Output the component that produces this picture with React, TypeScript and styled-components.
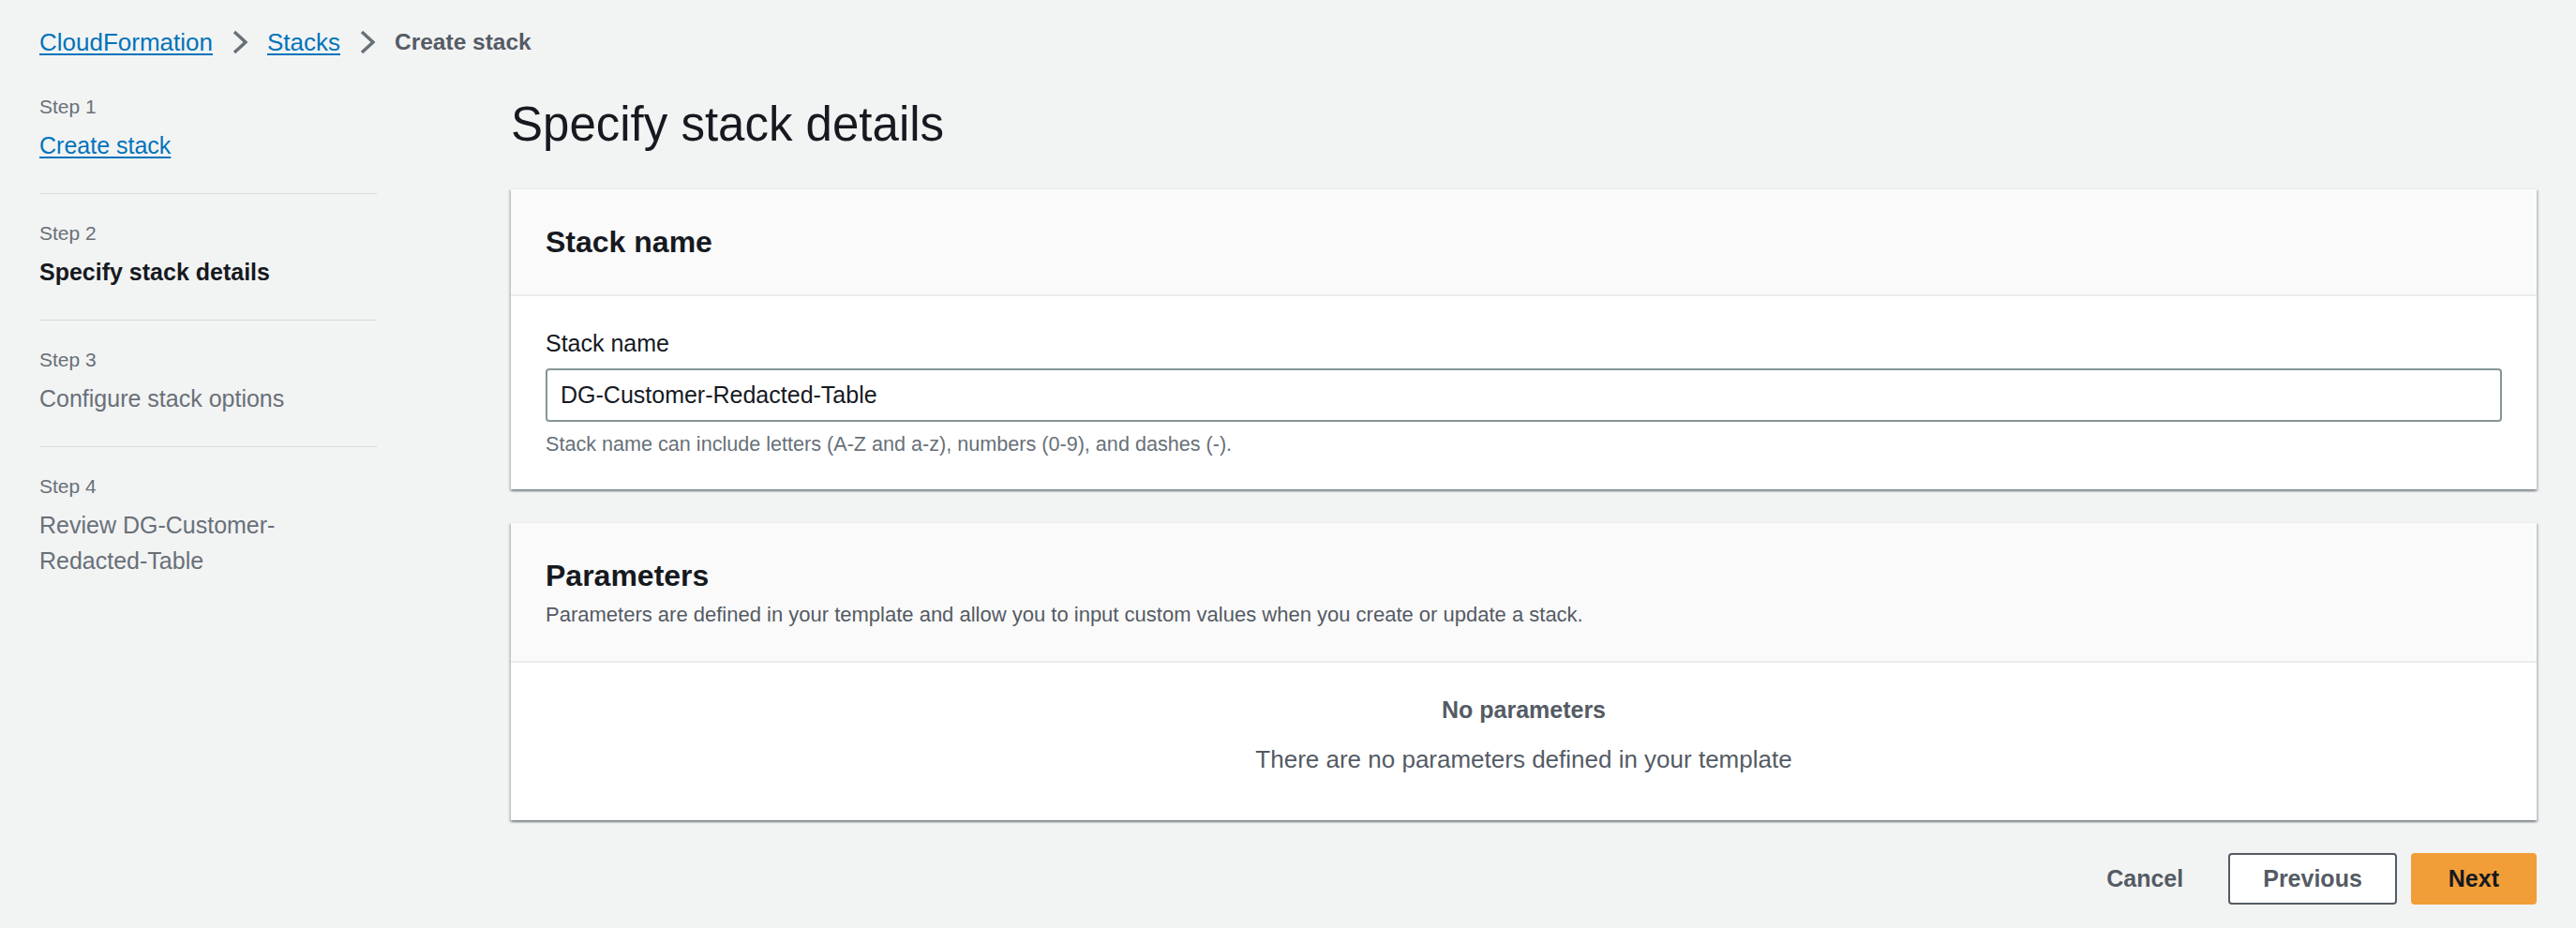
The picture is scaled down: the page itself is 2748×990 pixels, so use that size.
import React from "react";
import styled, { createGlobalStyle } from "styled-components";

const GlobalStyle = createGlobalStyle`
  body {
    margin: 0;
    background: #f2f3f3;
    font-family: "Liberation Sans", Arial, sans-serif;
    color: #16191f;
  }
`;

const Page = styled.div`
  padding: 0 42px;
`;

const Crumbs = styled.nav`
  display: flex;
  align-items: center;
  gap: 21px;
  padding-top: 27px;
  height: 36px;
  font-size: 26px;
  line-height: 36px;
`;

const CrumbLink = styled.a`
  color: #0073bb;
  text-decoration: underline;
  text-underline-offset: 3px;
  cursor: pointer;
`;

const CrumbCurrent = styled.span`
  color: #545b64;
  font-weight: 700;
  font-size: 24.5px;
`;

const Chevron = () => (
  <svg width="16" height="26" viewBox="0 0 16 26">
    <polyline
      points="2,2 14,13 2,24"
      fill="none"
      stroke="#687078"
      strokeWidth="3.5"
      strokeLinejoin="miter"
    />
  </svg>
);

const Layout = styled.div`
  display: grid;
  grid-template-columns: 360px 1fr;
  column-gap: 143px;
`;

const StepList = styled.ul`
  list-style: none;
  margin: 0;
  padding: 9px 0 0;
`;

const StepItem = styled.li`
  padding: 27px 0 32px;
  border-bottom: 1px solid #d5dbdb;

  &:last-child {
    border-bottom: none;
  }
`;

const StepNumber = styled.div`
  font-size: 21px;
  line-height: 30px;
  color: #687078;
  margin-bottom: 7px;
`;

const StepLabel = styled.div<{ $state: "link" | "active" | "disabled" }>`
  font-size: 25px;
  line-height: 38px;
  font-weight: ${(p) => (p.$state === "active" ? 700 : 400)};
  color: ${(p) =>
    p.$state === "link" ? "#0073bb" : p.$state === "active" ? "#16191f" : "#687078"};
  text-decoration: ${(p) => (p.$state === "link" ? "underline" : "none")};
  text-underline-offset: 3px;
`;

const Main = styled.main`
  padding-top: 38px;
  display: flex;
  flex-direction: column;
`;

const Title = styled.h1`
  margin: 0 0 36px;
  font-size: 51px;
  line-height: 64px;
  font-weight: 400;
  color: #16191f;
`;

const Card = styled.section`
  background: #fff;
  border-top: 1px solid #eaeded;
  box-shadow: 0 2px 2px 0 rgba(0, 28, 36, 0.3), 2px 2px 2px 0 rgba(0, 28, 36, 0.15),
    -2px 2px 2px 0 rgba(0, 28, 36, 0.15);
  margin-bottom: 35px;
`;

const CardHeader = styled.header<{ $bottom: number }>`
  background: #fafafa;
  border-bottom: 2px solid #eaeded;
  padding: 36px 37px ${(p) => p.$bottom}px;
`;

const CardTitle = styled.h2`
  margin: 0;
  font-size: 32px;
  line-height: 40px;
  font-weight: 700;
  color: #16191f;
`;

const CardDesc = styled.p`
  margin: 7px 0 0;
  font-size: 22px;
  line-height: 30px;
  color: #545b64;
`;

const CardBody = styled.div`
  padding: 32px 37px 33px;
`;

const FieldLabel = styled.label`
  display: block;
  font-size: 25px;
  line-height: 37px;
  color: #16191f;
  margin-bottom: 8px;
`;

const TextInput = styled.input`
  box-sizing: border-box;
  width: 100%;
  height: 57px;
  padding: 0 14px;
  border: 2px solid #879596;
  border-radius: 4px;
  background: #fff;
  font-family: inherit;
  font-size: 25px;
  color: #16191f;
  outline: none;
`;

const FieldHint = styled.div`
  margin-top: 9px;
  font-size: 21.6px;
  line-height: 30px;
  color: #687078;
`;

const Empty = styled.div`
  padding: 32px 37px 46px;
  text-align: center;
  color: #545b64;
  font-size: 26px;
  line-height: 37px;
`;

const EmptyTitle = styled.div`
  font-weight: 700;
  font-size: 25px;
  margin-bottom: 16px;
`;

const Actions = styled.div`
  display: flex;
  justify-content: flex-end;
  align-items: center;
  gap: 15px;
`;

const Button = styled.button<{ $variant: "link" | "normal" | "primary" }>`
  box-sizing: border-box;
  height: 55px;
  padding: 0 ${(p) => (p.$variant === "normal" ? 35 : p.$variant === "link" ? 31 : 38)}px;
  border-radius: 4px;
  font-family: inherit;
  font-size: 25px;
  font-weight: 700;
  cursor: pointer;
  border: 2px solid
    ${(p) =>
      p.$variant === "normal" ? "#545b64" : p.$variant === "primary" ? "#f29e38" : "transparent"};
  background: ${(p) =>
    p.$variant === "primary" ? "#f29e38" : p.$variant === "normal" ? "#fff" : "transparent"};
  color: ${(p) => (p.$variant === "primary" ? "#16191f" : "#545b64")};
`;

const steps: { n: number; label: string; state: "link" | "active" | "disabled" }[] = [
  { n: 1, label: "Create stack", state: "link" },
  { n: 2, label: "Specify stack details", state: "active" },
  { n: 3, label: "Configure stack options", state: "disabled" },
  { n: 4, label: "Review DG-Customer-Redacted-Table", state: "disabled" },
];

const App = () => {
  return (
    <Page>
      <GlobalStyle />
      <Crumbs>
        <CrumbLink>CloudFormation</CrumbLink>
        <Chevron />
        <CrumbLink>Stacks</CrumbLink>
        <Chevron />
        <CrumbCurrent>Create stack</CrumbCurrent>
      </Crumbs>
      <Layout>
        <StepList>
          {steps.map((s) => (
            <StepItem key={s.n}>
              <StepNumber>Step {s.n}</StepNumber>
              <StepLabel $state={s.state}>
                {s.n === 4 ? (
                  <>
                    Review DG-Customer-
                    <br />
                    Redacted-Table
                  </>
                ) : (
                  s.label
                )}
              </StepLabel>
            </StepItem>
          ))}
        </StepList>
        <Main>
          <Title>Specify stack details</Title>
          <Card>
            <CardHeader $bottom={36}>
              <CardTitle>Stack name</CardTitle>
            </CardHeader>
            <CardBody>
              <FieldLabel htmlFor="stack-name">Stack name</FieldLabel>
              <TextInput id="stack-name" defaultValue="DG-Customer-Redacted-Table" />
              <FieldHint>
                Stack name can include letters (A-Z and a-z), numbers (0-9), and dashes (-).
              </FieldHint>
            </CardBody>
          </Card>
          <Card>
            <CardHeader $bottom={34}>
              <CardTitle>Parameters</CardTitle>
              <CardDesc>
                Parameters are defined in your template and allow you to input custom values
                when you create or update a stack.
              </CardDesc>
            </CardHeader>
            <Empty>
              <EmptyTitle>No parameters</EmptyTitle>
              There are no parameters defined in your template
            </Empty>
          </Card>
          <Actions>
            <Button $variant="link">Cancel</Button>
            <Button $variant="normal">Previous</Button>
            <Button $variant="primary">Next</Button>
          </Actions>
        </Main>
      </Layout>
    </Page>
  );
};

export default App;
